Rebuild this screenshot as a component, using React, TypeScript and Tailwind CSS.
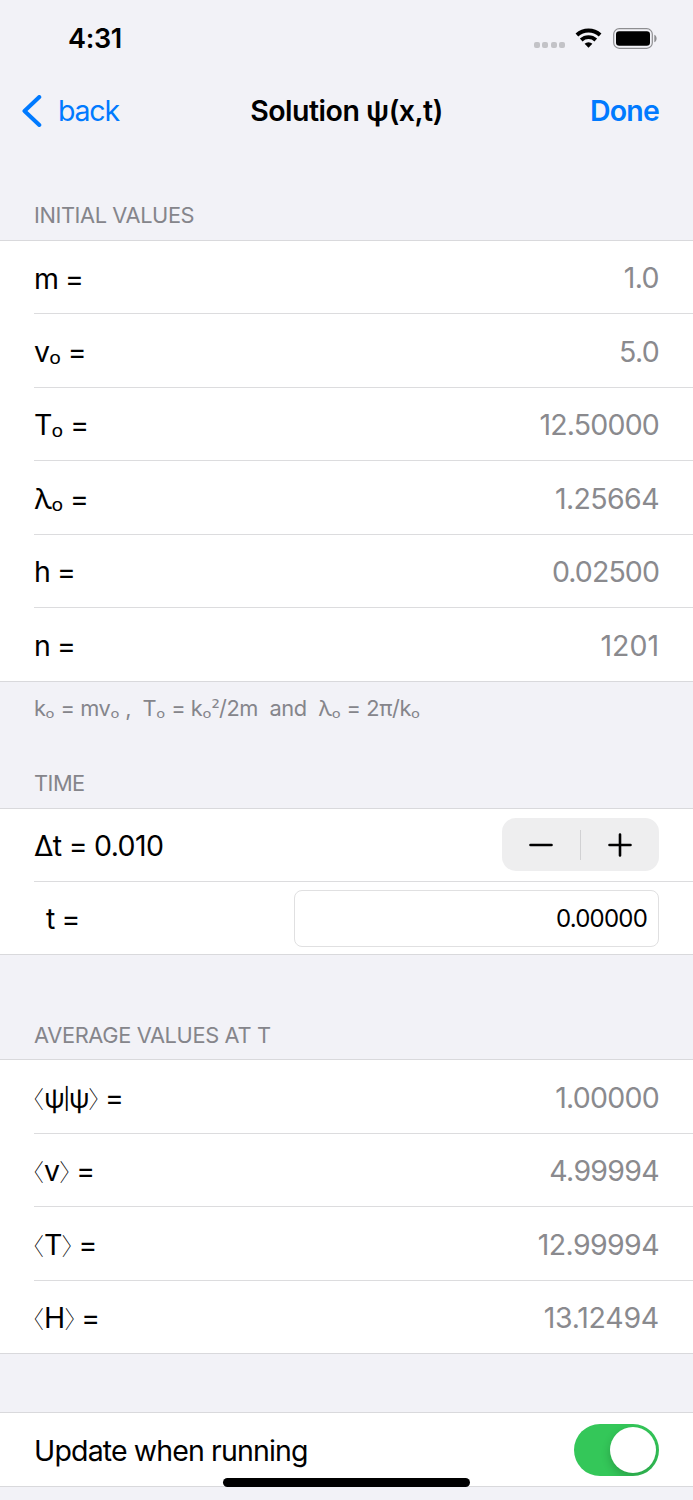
import type { ReactNode } from "react";

function StatusBar() {
  return (
    <div className="flex h-[76px] items-center justify-between pl-[68px] pr-9">
      <span className="text-[27px] font-semibold leading-none tracking-[-0.300px]">4:31</span>
      <div className="flex items-center">
        <div className="mr-[10px] mt-[13px] flex gap-[2.400px]">
          {[0, 1, 2, 3].map((dot) => (
            <span key={dot} className="size-[6px] rounded-[2px] bg-[#c3c3c7]" />
          ))}
        </div>
        <svg className="mr-[11px]" width="27" height="20" viewBox="0 0 27 20">
          <path d="M13.500 19.700 9.600 15.800a5.700 5.700 0 0 1 7.800 0Z" />
          <path d="M6.200 12a10.600 10.600 0 0 1 14.600 0" fill="none" stroke="#000" strokeWidth="3.800" />
          <path d="M1.900 6.900a17.200 17.200 0 0 1 23.200 0" fill="none" stroke="#000" strokeWidth="4" />
        </svg>
        <svg width="44" height="21" viewBox="0 0 44 21">
          <rect x="0.7" y="0.7" width="38.6" height="19.6" rx="5.6" fill="none" stroke="#8e8e91" strokeWidth="1.200" />
          <rect x="3" y="3.200" width="34" height="14.600" rx="3.200" />
          <path d="M41.300 6.800c3 1 3 6.400 0 7.400Z" fill="#8e8e91" />
        </svg>
      </div>
    </div>
  );
}

function NavBar() {
  return (
    <div className="grid h-[70px] grid-cols-[1fr_auto_1fr] items-center px-[22px] text-[28.500px]">
      <div className="flex items-center gap-[16px] text-[#007aff]">
        <svg width="20" height="32" viewBox="0 0 20 32">
          <path d="M17.300 2 2.500 16l14.800 14" fill="none" stroke="currentColor" strokeWidth="4" strokeLinecap="round" strokeLinejoin="round" />
        </svg>
        <span className="tracking-[-1.200px]">back</span>
      </div>
      <h1 className="font-semibold tracking-[-0.500px]">Solution ψ(x,t)</h1>
      <span className="pr-[12px] text-right font-semibold tracking-[-0.800px] text-[#007aff]">Done</span>
    </div>
  );
}

type RowProps = {
  label: ReactNode;
  children: ReactNode;
  last?: boolean;
  height: string;
  labelPad?: string;
};

function Row({ label, children, last, height, labelPad = "pt-[3px]" }: RowProps) {
  return (
    <div className={last ? "border-b border-[#d9d9dc]" : "ml-[34px] border-b border-[#dcdcde]"}>
      <div className={`flex items-center justify-between pr-[34px] ${height} ${last ? "pl-[34px]" : ""}`}>
        <span className={`whitespace-pre text-[28.500px] leading-[34px] tracking-[-0.800px] [word-spacing:-0.300px] ${labelPad}`}>
          {label}
        </span>
        {children}
      </div>
    </div>
  );
}

function Value({ children, tracking }: { children: ReactNode; tracking: string }) {
  return <span className={`pt-[2.500px] text-[28.500px] leading-[34px] text-[#8a8a8e] ${tracking}`}>{children}</span>;
}

function Group({ children }: { children: ReactNode }) {
  return <div className="border-t border-[#d9d9dc] bg-white">{children}</div>;
}

function Caption({ children, className }: { children: ReactNode; className: string }) {
  return (
    <div className={`flex flex-col justify-end px-[34px] text-[21.800px] leading-[26px] text-[#85858b] ${className}`}>
      <span>{children}</span>
    </div>
  );
}

function Sub() {
  return <span className="relative top-[2px] font-['DejaVu_Sans'] text-[1.060em] leading-none">ₒ</span>;
}

function Bra({ children }: { children: ReactNode }) {
  return (
    <>
      <span className="ml-[-2px] font-['Noto_Sans_CJK_JP'] text-[24px] font-thin leading-none tracking-normal [font-feature-settings:'halt']">〈</span>
      {children}
      <span className="mr-[-2px] font-['Noto_Sans_CJK_JP'] text-[24px] font-thin leading-none tracking-normal [font-feature-settings:'halt']">〉</span>
    </>
  );
}

const initial: [ReactNode, string, string][] = [
  ["m =", "1.0", "tracking-[-0.600px]"],
  [<>v<Sub /> =</>, "5.0", "tracking-[-0.700px]"],
  [<>T<Sub /> =</>, "12.50000", "tracking-[-0.800px]"],
  [<>λ<Sub /> =</>, "1.25664", "tracking-[-0.600px]"],
  ["h =", "0.02500", "tracking-[-0.900px]"],
  ["n =", "1201", "tracking-normal"],
];

const averages: [ReactNode, string, string][] = [
  [
    <>
      <Bra>
        <span className="text-[27px] leading-none tracking-[-1.800px]">ψ</span>
        <span className="relative top-[-2px] text-[21px] leading-none tracking-[-1.500px]">|</span>
        <span className="text-[27px] leading-none tracking-[-1.500px]">ψ</span>
      </Bra>
      {" ="}
    </>,
    "1.00000",
    "tracking-[-0.750px]",
  ],
  [<><Bra>v</Bra> =</>, "4.99994", "tracking-[-0.700px]"],
  [<><Bra>T</Bra> =</>, "12.99994", "tracking-[-0.600px]"],
  [<><Bra>H</Bra> =</>, "13.12494", "tracking-[-0.250px]"],
];

export default function App() {
  return (
    <div className="relative h-[1500px] w-[693px] overflow-hidden bg-[#f2f2f7] font-['Inter','Noto_Sans',sans-serif] text-black">
      <StatusBar />
      <NavBar />

      <Caption className="h-[94px] pb-[12px] tracking-[-0.400px]">INITIAL VALUES</Caption>
      <Group>
        {initial.map(([label, value, tracking], i) => (
          <Row
            key={value}
            label={label}
            last={i === initial.length - 1}
            height={i === 0 ? "h-[72px]" : i === initial.length - 1 ? "h-[73px]" : "h-[72.500px]"}
          >
            <Value tracking={tracking}>{value}</Value>
          </Row>
        ))}
      </Group>
      <Caption className="h-[39px] whitespace-pre tracking-[-0.410px]">
        k<Sub /> = mv<Sub /> ,  T<Sub /> = k<Sub /><span className="relative top-[-1px] font-['DejaVu_Sans'] text-[21px] leading-none tracking-[-1px]">²</span>/2m  and  λ<Sub /> = 2π/k<Sub />
      </Caption>

      <Caption className="h-[87px] pb-[12px] tracking-[-0.500px]">TIME</Caption>
      <Group>
        <Row label={<span className="tracking-[-0.600px]">Δt = 0.010</span>} height="h-[72px]" labelPad="pt-[1px]">
          <div className="-mt-px flex h-[53px] w-[157px] items-center rounded-[14px] bg-[#eeeeef]">
            <div className="flex flex-1 justify-center">
              <svg width="24" height="24" viewBox="0 0 24 24" stroke="#000" strokeWidth="2.600" strokeLinecap="round">
                <path d="M1.500 12h21" />
              </svg>
            </div>
            <div className="h-[30px] w-px bg-[#d1d1d3]" />
            <div className="flex flex-1 justify-center">
              <svg width="24" height="24" viewBox="0 0 24 24" stroke="#000" strokeWidth="2.600" strokeLinecap="round">
                <path d="M1.500 12h21M12 1.500v21" />
              </svg>
            </div>
          </div>
        </Row>
        <Row label={<span className="pl-[12px]">t =</span>} last height="h-[72px]" labelPad="pt-[1px]">
          <div className="flex h-[57px] w-[365px] items-center justify-end rounded-[8px] border border-[#e0e0e1] pr-[11px] pt-[2px] text-[24px] tracking-[-0.800px]">
            0.00000
          </div>
        </Row>
      </Group>

      <Caption className="h-[104px] pb-[11px] tracking-[-0.350px]">AVERAGE VALUES AT T</Caption>
      <Group>
        {averages.map(([label, value, tracking], i) => (
          <Row key={value} label={label} last={i === averages.length - 1} height="h-[72.500px]">
            <Value tracking={tracking}>{value}</Value>
          </Row>
        ))}
      </Group>

      <div className="h-[58px]" />
      <Group>
        <Row label={<span className="tracking-[-0.820px]">Update when running</span>} last height="h-[73px]">
          <div className="flex h-[52px] w-[85px] items-center justify-end overflow-hidden rounded-full bg-[#34c759] pr-[3px]">
            <div className="size-[46px] rounded-full bg-white shadow-[0_4px_10px_rgba(0,0,0,0.2)]" />
          </div>
        </Row>
      </Group>
      <div className="absolute left-[223px] top-[1478px] h-[9px] w-[247px] rounded-full bg-black" />
    </div>
  );
}
